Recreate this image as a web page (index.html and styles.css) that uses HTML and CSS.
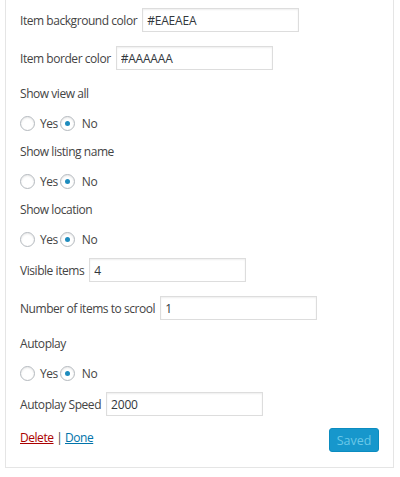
FILE: index.html
```html
<!DOCTYPE html>
<html lang="en">
<head>
    <meta charset="UTF-8">
    <title>Slider widget</title>
    <link rel="stylesheet" href="styles.css">
</head>
<body>
    <!-- widget settings -->
    <div class="widget">
        <p class="field"><label>Item background color</label><input type="text" class="txt" value="#EAEAEA"></p>
        <p class="field"><label>Item border color</label><input type="text" class="txt" value="#AAAAAA"></p>

        <p class="title">Show view all</p>
        <p class="choice"><input type="radio" name="viewall"><label>Yes</label><input type="radio" name="viewall" checked><label>No</label></p>

        <p class="title">Show listing name</p>
        <p class="choice"><input type="radio" name="listname"><label>Yes</label><input type="radio" name="listname" checked><label>No</label></p>

        <p class="title">Show location</p>
        <p class="choice"><input type="radio" name="location"><label>Yes</label><input type="radio" name="location" checked><label>No</label></p>

        <p class="field"><label>Visible items</label><input type="text" class="txt" value="4"></p>
        <p class="field"><label>Number of items to scrool</label><input type="text" class="txt" value="1"></p>

        <p class="title">Autoplay</p>
        <p class="choice"><input type="radio" name="autoplay"><label>Yes</label><input type="radio" name="autoplay" checked><label>No</label></p>

        <p class="field"><label>Autoplay Speed</label><input type="text" class="txt" value="2000"></p>

        <div class="actions">
            <span class="links"><a href="#" class="delete">Delete</a> | <a href="#" class="done">Done</a></span>
            <button class="saved" disabled>Saved</button>
        </div>
    </div>
</body>
</html>
```

FILE: styles.css
```css
body{ margin: 0; background: #fff; font-family: "Open Sans", "Noto Sans", sans-serif; font-size: 12px; letter-spacing: -0.45px; color: #444;}
.widget{ margin-left: 5px; width: 389px; box-sizing: border-box; border: 1px solid #e5e5e5; border-top: 0; padding: 8px 14px 15px 14px;}
.widget p{ margin: 0 0 13px 0;}
.widget .field{ display: flex; align-items: center; height: 24px; margin-bottom: 14px;}
.field label{ margin-right: 5px;}
.txt{ width: 157px; height: 24px; box-sizing: border-box; border: 1px solid #ddd; box-shadow: inset 0 1px 2px rgba(0,0,0,.07); padding: 0 4px; font-family: inherit; font-size: 12px; letter-spacing: -0.2px; color: #32373c; outline: none;}
.title{ height: 20px; line-height: 20px;}
.choice{ display: flex; align-items: center; height: 12px;}
.choice input{ -webkit-appearance: none; appearance: none; flex: none; width: 15px; height: 15px; margin: 0 5px 0 0; border: 1px solid #b4b9be; border-radius: 50%; background: #fff; box-shadow: inset 0 1px 2px rgba(0,0,0,.1); display: flex; align-items: center; justify-content: center;}
.choice input:checked::before{ content: ""; width: 5px; height: 5px; border-radius: 50%; background: #1e8cbe;}
.choice label{ margin-right: 2px;}
.choice label + input{ margin-right: 7px;}
.actions{ display: flex; justify-content: space-between; align-items: flex-start; margin-top: -2px;}
.links{ line-height: 19px;}
.delete{ color: #a00;}
.done{ color: #0073aa;}
.saved{ width: 50px; height: 24px; border: 1px solid #0b8cc0; border-radius: 3px; background: #1797cc; color: #6ac8e8; font-family: inherit; font-size: 12.5px; letter-spacing: 0; padding: 0;}
```
